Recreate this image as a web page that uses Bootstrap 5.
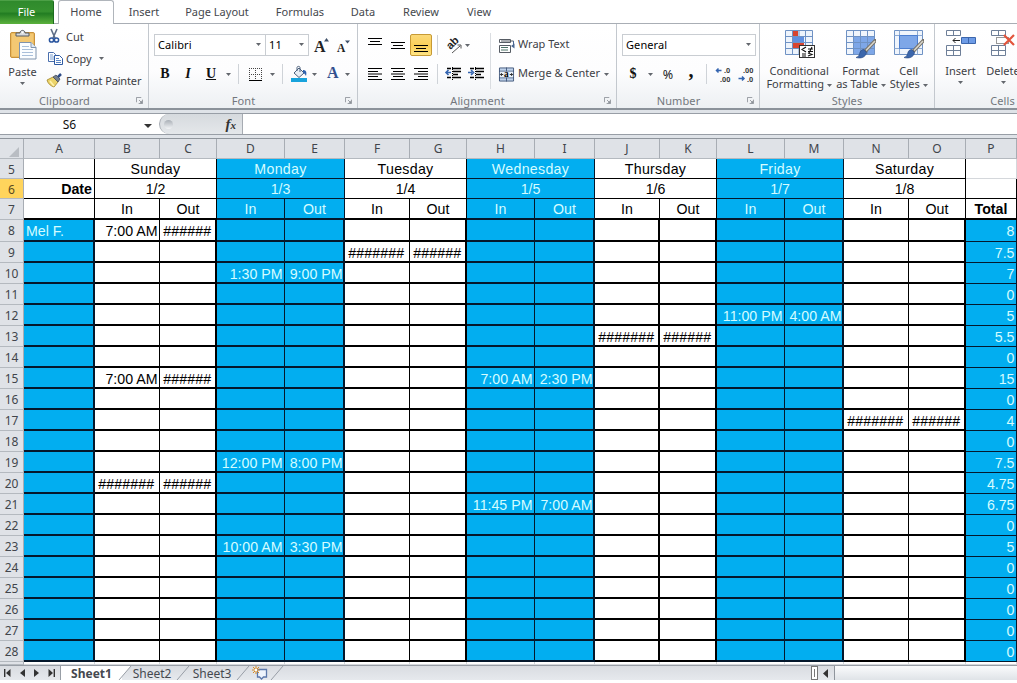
<!DOCTYPE html>
<html lang="en">
<head>
<meta charset="utf-8">
<title>Weekly schedule</title>
<link href="https://cdn.jsdelivr.net/npm/bootstrap@5.3.0/dist/css/bootstrap.min.css" rel="stylesheet">
<style>
body{width:1017px;height:683px;overflow:hidden;background:#fff;font:11px/13px "Noto Sans","Open Sans",sans-serif;color:#3d4045}
svg{display:block;flex:none;overflow:visible}
.app{width:1017px;height:680px;overflow:hidden}
/* ribbon tabs */
.tabs{height:24px;border-bottom:1px solid #a9aeb5}
.tabs>div{height:24px;line-height:24px;text-align:center;flex:none;color:#45484d}
.tab-file{width:54px;background:linear-gradient(#2f8a2c,#35912f 45%,#227d22 55%,#5bb13c);color:#fff!important;border-right:1px solid #1c6d1f;border-top:1px solid #4ca046;margin-right:4px;border-radius:0 2px 0 0;line-height:22px!important}
.tab-home{width:56px;border:1px solid #b0b5bb;border-bottom:0;border-radius:3px 3px 0 0;background:#fff;line-height:22px!important}
.t-ins{width:60px}.t-page{width:86px}.t-form{width:80px}.t-data{width:46px}.t-rev{width:70px}.t-view{width:46px}
/* ribbon */
.ribbon{height:86px;background:linear-gradient(#fff 0,#fdfdfe 55%,#edf0f3 100%);border-bottom:2px solid #8b929a}
.grp{flex:none;position:relative;border-right:1px solid #c3c8ce;height:84px}
.grp-body{height:69px}
.grp-name{height:15px;line-height:16px;color:#73777d;text-align:center;letter-spacing:.1px}
.launch{position:absolute;right:5px;bottom:4px}
.g-clip{width:149px}.g-font{width:209px}.g-align{width:259px}.g-num{width:143px}.g-style{width:175px}.g-cells{width:140px}
.g-clip .grp-name,.g-font .grp-name,.g-num .grp-name,.g-align .grp-name{padding-right:19px}
.r{display:grid;height:22px;align-items:center;justify-items:center}
.rows{padding:10px 0 0 5px;display:grid;row-gap:7px;align-content:start}
.f1{grid-template-columns:112px 43px 24px 20px}
.f2{grid-template-columns:22px 24px 22px 12px 8px 26px 8px 13px 20px 10px 26px 5px}
.a1{grid-template-columns:24px 22px 24px 8px 24px 21px}
.n2{grid-template-columns:22px 12px 24px 22px 8px 26px 20px}
.combo{border:1px solid #c9cdd2;background:#fff;height:22px;width:100%;color:#000;padding:0 4px 0 3px;display:flex;align-items:center;justify-content:space-between;letter-spacing:.1px;line-height:18px;padding-bottom:1px}
.combo.wide{width:134px}
.rule{width:1px;height:20px;background:#cfd3d8}
.rule.tall{height:56px;margin:9px 0 0 4px;background:#dadde1}
.glyph{font:bold 14px/16px "Liberation Serif",serif;color:#111}
.comma{font-size:20px;line-height:10px;padding-bottom:9px}
.pct{font-size:12.500px;color:#222}
.hot{width:22px;height:22px;border:1px solid #c79a35;border-radius:2px;background:linear-gradient(#fbd978,#fbcf58 55%,#ffe586);display:grid;place-items:center}
.big{text-align:center;line-height:13px;display:flex;flex-direction:column;align-items:center;padding-top:6px}
.big svg.pic{margin-bottom:5px}
.big .arr,.cap .arr{display:inline-block}
.clip-col{padding-top:1px}
.clip-col>div{height:22px;display:flex;align-items:center;gap:3px;letter-spacing:-.03px}
.tool-copy{padding-left:1px}
.paste{width:45px}.cond{width:79px}.fmt{width:45px}.cel{width:51px}.ins{width:51px}.del{width:34px}
/* formula bar */
.fbar-wrap{height:29px;background:#dfe3e8;padding-top:3px;border-bottom:1px solid #8f959c}
.fbar{height:22px;background:#fff;border-top:1px solid #989ea6;border-bottom:1px solid #989ea6}
.namebox{width:159px;font-size:12px;color:#111}
.namebox span{width:139px;text-align:center}
.fx{width:84px;background:linear-gradient(#d6dade,#e4e7ea);border:1px solid #a6abb2;border-width:0 1px 0 1px;border-radius:10px 0 0 10px;justify-content:space-between;padding:0 6px 0 4px}
.knob{width:9px;height:9px;border-radius:50%;background:linear-gradient(#a9afb6,#f3f5f7)}
.fx b{font:italic bold 15px/18px "Liberation Serif",serif;color:#333}
.fx b small{font-size:11px}
/* sheet */
.sheet{display:grid;grid-template-columns:24px 71px 65px 57px 68px 60px 65px 57px 68px 60px 65px 57px 68px 59px 65px 57px 51px;
 grid-template-rows:20px 20px 20px 21px 22px repeat(20,21px) 3px;font:14.200px/20px "Liberation Sans",Arial,sans-serif;color:#000;height:526px;overflow:hidden}
.sheet>div{white-space:nowrap;overflow:hidden;padding:0 2px;border:0 solid #000}
.sheet .hd{font:12px/20px "Noto Sans",sans-serif;color:#41454b;text-align:center;background:#dfe2e7;border-right:1px solid #a8adb4;border-bottom:1px solid #b4b9bf;padding:0}
.sheet .rh{line-height:21px}
.sheet .here{background:#ffd45c;color:#5a4a20}
.sheet .blue{background:#02aef0;color:#d4fcff;border-color:#04182c}
.sheet .th{text-align:center;border-width:0 1px 1px 0}
.sheet .day{letter-spacing:.3px}
.sheet .in{border-bottom-width:2px}
.sheet .td{text-align:right;line-height:22px;border-width:0 1px 2px 0;padding:0 1.500px 0 0}
.sheet .td.text-start{padding-left:2px}
.sheet .thick{border-right-width:2px}
.sheet .thick:not(.text-start){padding-right:.500px}
.sheet .hash{letter-spacing:.1px;text-align:center}
.sheet .tot{border-bottom-width:1px}
.sheet .plain{border-color:#d4d7db}
/* tab strip */
.strip{height:15px;background:linear-gradient(#d9dce1,#e6e9ed);border-top:1px solid #989ea6;font-size:12px;line-height:16px;color:#45494f}
.nav4{width:61px;padding:0 0 0 4px;border-right:1px solid #989ea6;display:flex;align-items:center;gap:9px}
.sh1{width:61px;background:#fff;font-weight:700;text-align:center;height:14px}
.sh{width:50px;text-align:center}
.hscroll{flex:1;margin-left:5px;border-left:1px solid #8f959c;background:linear-gradient(#fafbfc,#dfe3e7);height:14px}
.split{width:7px;height:14px;border:1px solid #777;background:#fff;margin-left:528px;display:grid;place-items:center}
.split i{width:1px;height:8px;background:#777}
</style>
</head>
<body>
<svg width="0" height="0" class="position-absolute">
 <defs>
  <symbol id="arr" viewBox="0 0 5 3"><path d="M0 0h5L2.500 3z" fill="#63676d"/></symbol>
  <symbol id="launch" viewBox="0 0 8 8"><path d="M.5 6V.5H6M7.500 3v4.500H3M3.500 3.500l3 3" fill="none" stroke="#8b9097"/><path d="M7 4v3H4z" fill="#8b9097"/></symbol>
  <symbol id="brush" viewBox="0 0 20 20"><path d="M19.500 1.500 9 12.500" stroke="#77736a" stroke-width="3.600" stroke-linecap="round"/><path d="M19 2 10 11.500" stroke="#d9d6cc" stroke-width="1.600"/><path d="M8 10.500c-3 0-4 2-4.500 4.500-.5 1.800-1.800 3-3.500 3.500 5 1.500 10-.5 10.500-5z" fill="#3b66ab" stroke="#27477f" stroke-width=".6"/></symbol>
 </defs>
</svg>
<div class="app">
 <div class="tabs d-flex">
  <div class="tab-file">File</div><div class="tab-home">Home</div><div class="t-ins">Insert</div><div class="t-page">Page Layout</div><div class="t-form">Formulas</div><div class="t-data">Data</div><div class="t-rev">Review</div><div class="t-view">View</div>
 </div>

 <div class="ribbon d-flex overflow-hidden">
  <div class="grp g-clip">
   <div class="grp-body d-flex">
    <div class="big paste">
     <svg class="pic" width="28" height="30" viewBox="0 0 28 30"><rect x="1.500" y="2.500" width="24" height="25" rx="1.500" fill="#ecbb60" stroke="#c8923c"/><rect x="3" y="4" width="21" height="22" fill="#f3c873"/><path d="M7 6V3h4c0-3.500 5-3.500 5 0h4v3z" fill="#d7dade" stroke="#555b63"/><circle cx="13.500" cy="2.500" r="1" fill="#fff"/><path d="M10.500 12.500H22l5 5V29H10.500z" fill="#fbfdff" stroke="#7f93ad"/><path d="M22 12.500v5h5" fill="#dce8f5" stroke="#7f93ad"/><path d="M13 16.500h7M13 19.500h11M13 22.500h11M13 25.500h11" stroke="#a9bfda"/></svg>
     Paste<svg class="arr mt-1" width="5" height="3"><use href="#arr"/></svg>
    </div>
    <div class="clip-col">
     <div><svg width="18" height="14" viewBox="0 0 18 14"><path d="M6 0l4 9M12 0L8 9" stroke="#5d6d86" stroke-width="1.600"/><circle cx="6.500" cy="11" r="2.100" fill="none" stroke="#2a559f" stroke-width="1.500"/><circle cx="11.500" cy="11" r="2.100" fill="none" stroke="#2a559f" stroke-width="1.500"/></svg>Cut</div>
     <div class="tool-copy"><svg width="17" height="14" viewBox="0 0 17 14"><path d="M2.500 1.500h5l2 2v7h-7z" fill="#fff" stroke="#4a6fae"/><path d="M4 4h3M4 6h4M4 8h4" stroke="#7d9fd0"/><path d="M8.500 4.500h5l3 3v6h-8z" fill="#fff" stroke="#2f5aa3"/><path d="M10 7.500h3M10 9.500h5M10 11.500h5" stroke="#5b86c6"/></svg>Copy<svg class="ms-1" width="5" height="3"><use href="#arr"/></svg></div>
     <div><svg width="18" height="14" viewBox="0 0 18 14"><path d="M2 7l6-3 5 5-4 5C6 13 3 11 2 7z" fill="#ecd46a" stroke="#a08327" stroke-width=".8"/><path d="M5 8l4 5" stroke="#fff3b0" stroke-width="1.500"/><path d="M8 4l3-2 4 4-2 3z" fill="#75808e" stroke="#454d59" stroke-width=".8"/><path d="M13 4l3-3" stroke="#2c4a86" stroke-width="2.500"/></svg><span class="text-nowrap" style="letter-spacing:-.15px">Format Painter</span></div>
    </div>
   </div>
   <div class="grp-name">Clipboard</div><svg class="launch" width="7" height="7"><use href="#launch"/></svg>
  </div>

  <div class="grp g-font">
   <div class="grp-body rows">
    <div class="r f1">
     <div class="combo">Calibri<svg width="5" height="3"><use href="#arr"/></svg></div>
     <div class="combo border-start-0">11<svg width="5" height="3"><use href="#arr"/></svg></div>
     <svg width="15" height="15" viewBox="0 0 15 15"><text x="0" y="14" font-family="Liberation Serif,serif" font-weight="700" font-size="16" fill="#222">A</text><path d="M10 3.500L12.500 0 15 3.500z" fill="#3f5068"/></svg>
     <svg width="13" height="15" viewBox="0 0 13 15"><text x="0" y="14" font-family="Liberation Serif,serif" font-weight="700" font-size="11.500" fill="#222">A</text><path d="M8 2.500h5L10.500 5.500z" fill="#3f5068"/></svg>
    </div>
    <div class="r f2">
     <span class="glyph">B</span><span class="glyph fst-italic">I</span><span class="glyph text-decoration-underline">U</span><svg width="5" height="3"><use href="#arr"/></svg><i class="rule"></i>
     <svg width="13" height="13" viewBox="0 0 13 13"><path d="M.5 0v12M6.500 0v12M12.500 0v12M0 .5h13M0 6.500h13" stroke="#444" stroke-dasharray="1 1"/><path d="M0 12.500h13" stroke="#000"/></svg>
     <svg width="5" height="3"><use href="#arr"/></svg><i class="rule"></i>
     <svg width="16" height="16" viewBox="0 0 16 16"><path d="M3 7l5-5 5 5-5 4.500z" fill="#e8eef5" stroke="#4c607c"/><path d="M6 5V1.500c0-1.500 3-1.500 3 0V6" fill="none" stroke="#4c607c"/><path d="M12 4c3 0 4 2 3 6-1-2-2-3-3-3z" fill="#2f62ae"/><path d="M0 12h16v4H0z" fill="#18a3dc"/></svg>
     <svg width="5" height="3"><use href="#arr"/></svg>
     <svg width="11" height="14" viewBox="0 0 11 14"><text x="0" y="11" font-family="Liberation Serif,serif" font-weight="700" font-size="16" fill="#33518e">A</text></svg>
     <svg width="5" height="3"><use href="#arr"/></svg>
    </div>
   </div>
   <div class="grp-name">Font</div><svg class="launch" width="7" height="7"><use href="#launch"/></svg>
  </div>

  <div class="grp g-align">
   <div class="grp-body d-flex">
    <div class="rows">
     <div class="r a1">
      <svg width="14" height="14" viewBox="0 0 14 14"><path d="M0 .5h14M2 3.500h10M0 6.500h14" stroke="#000"/></svg>
      <svg width="14" height="14" viewBox="0 0 14 14"><path d="M0 4.500h14M2 7.500h10M0 10.500h14" stroke="#000"/></svg>
      <div class="hot"><svg width="14" height="14" viewBox="0 0 14 14"><path d="M0 7.500h14M2 10.500h10M0 13.500h14" stroke="#000"/></svg></div>
      <i class="rule"></i>
      <svg width="15" height="15" viewBox="0 0 15 15"><text transform="translate(4.500 12) rotate(-45)" font-family="Liberation Sans,sans-serif" font-weight="700" font-size="11" fill="#222">ab</text><path d="M6 15l8-7M15 7v3.500M15 7h-3.500" stroke="#555" fill="none"/></svg>
      <svg class="me-auto" width="5" height="3"><use href="#arr"/></svg>
     </div>
     <div class="r a1">
      <svg width="14" height="12" viewBox="0 0 14 12"><path d="M0 .5h14M0 3.500h10M0 6h14M0 8.500h10M0 11.500h14" stroke="#000"/></svg>
      <svg width="14" height="12" viewBox="0 0 14 12"><path d="M0 .5h14M2 3.500h10M0 6h14M2 8.500h10M0 11.500h14" stroke="#000"/></svg>
      <svg width="14" height="12" viewBox="0 0 14 12"><path d="M0 .5h14M4 3.500h10M0 6h14M4 8.500h10M0 11.500h14" stroke="#000"/></svg>
      <i class="rule"></i>
      <svg width="16" height="14" viewBox="0 0 16 14"><path d="M2 1.500h4M7 1.500h9M8 4.500h8M8 7.500h5M2 10.500h4M7 10.500h9" stroke="#000" stroke-width="1.500"/><path d="M7.500 0v14" stroke="#000" stroke-dasharray="1 1"/><path d="M6 5.500H2M3.500 3L1 5.500 3.500 8" fill="none" stroke="#3565b0" stroke-width="1.600"/></svg>
      <svg width="16" height="14" viewBox="0 0 16 14"><path d="M2 1.500h4M7 1.500h9M8 4.500h8M8 7.500h5M2 10.500h4M7 10.500h9" stroke="#000" stroke-width="1.500"/><path d="M7.500 0v14" stroke="#000" stroke-dasharray="1 1"/><path d="M0 5.500h4M3 3l2.500 2.500L3 8" fill="none" stroke="#3565b0" stroke-width="1.600"/></svg>
     </div>
    </div>
    <i class="rule tall"></i>
    <div class="rows ps-2">
     <div class="d-flex align-items-center r"><svg class="me-1" width="15" height="15" viewBox="0 0 15 15"><path d="M.5 1.500h11v3H.5z" fill="#fff" stroke="#555b63"/><path d="M2 3h12.500" stroke="#555b63"/><path d="M.5 7.500h11v7H.5z" fill="#fff" stroke="#555b63"/><path d="M2 9.500h7M2 12h7" stroke="#4c7267"/><path d="M14.500 3v5" stroke="#4b6790"/><path d="M12 8l3.500-2.500v5z" fill="#4b6790"/></svg><span class="pb-1">Wrap Text</span></div>
     <div class="d-flex align-items-center r"><svg class="me-1" width="15" height="15" viewBox="0 0 16 15"><path d="M.5.5h15v14H.5z" fill="#bfd2eb" stroke="#43597c"/><path d="M8 0v15M0 4h16M0 11h16" stroke="#43597c"/><path d="M1 4.500h14v6H1z" fill="#e9f1fa"/><text x="5.300" y="10.300" font-family="Liberation Serif,serif" font-weight="700" font-size="10" fill="#000">a</text><path d="M1.500 7.500h3M14.500 7.500h-3M3 6L1.500 7.500 3 9M13 6l1.500 1.500L13 9" fill="none" stroke="#222"/></svg><span class="pb-1">Merge &amp; Center</span><svg class="ms-1" width="5" height="3"><use href="#arr"/></svg></div>
    </div>
   </div>
   <div class="grp-name">Alignment</div><svg class="launch" width="7" height="7"><use href="#launch"/></svg>
  </div>

  <div class="grp g-num">
   <div class="grp-body rows">
    <div class="combo wide">General<svg width="5" height="3"><use href="#arr"/></svg></div>
    <div class="r n2">
     <span class="glyph">$</span><svg width="5" height="3"><use href="#arr"/></svg><span class="pct">%</span><span class="glyph comma">,</span><i class="rule"></i>
     <svg width="16" height="15" viewBox="0 0 16 15" font-family="Liberation Sans,sans-serif" font-size="7.500" font-weight="700" fill="#333"><text x="9" y="6">.0</text><text x="5" y="14.700">.00</text><path d="M6.500 3.500H1.500M3.500 1.500l-2 2 2 2" fill="none" stroke="#3565b0" stroke-width="1.500"/></svg>
     <svg width="16" height="15" viewBox="0 0 16 15" font-family="Liberation Sans,sans-serif" font-size="7.500" font-weight="700" fill="#333"><text x="5" y="6">.00</text><text x="9" y="14.700">.0</text><path d="M.5 11.500h5.500M4 9.500l2 2-2 2" fill="none" stroke="#3565b0" stroke-width="1.500"/></svg>
    </div>
   </div>
   <div class="grp-name">Number</div><svg class="launch" width="7" height="7"><use href="#launch"/></svg>
  </div>

  <div class="grp g-style">
   <div class="grp-body d-flex">
    <div class="big cond"><svg class="pic" width="29" height="29" viewBox="0 0 29 29"><path d="M.5.500h27v24H.500z" fill="#eef4fc"/><path d="M7 .500h6v6H7zM7 12.500h12v6H7z" fill="#d8432f"/><path d="M7 6.500h12v6H7z" fill="#5f8fe0"/><path d="M.5.500h27v24H.500zM7.500.500v24M14 .500v6M14 18v6M20.500.500v24M.500 6.500h27M.500 12.500h27M.500 18.500h27" fill="none" stroke="#6f92c4"/><rect x="14.500" y="15.500" width="15" height="12" fill="#fff" stroke="#333"/><path d="M21 17l-4 2.500 4 2.500M17 24h4M17 26h4M23 19h5M23 21.500h5M27 17l-3 6M23 23l4 1.500-4 1.500" fill="none" stroke="#111" stroke-width="1.100"/></svg>Conditional<span class="cap">Formatting <svg class="arr align-middle" width="5" height="3"><use href="#arr"/></svg></span></div>
    <div class="big fmt"><svg class="pic" width="29" height="29" viewBox="0 0 29 29"><path d="M.5.500h28v24H.500z" fill="#f0f5fc"/><path d="M7.500 6.500h21v18h-21z" fill="#7ea7e8"/><path d="M.5.500h28v24H.500zM7.500.500v24M14.500.500v24M21.500.500v24M.500 6.500h28M.500 12.500h28M.500 18.500h28" fill="none" stroke="#6f92c4"/><use href="#brush" x="10" y="9" width="20" height="20"/></svg><span>Format</span><span class="cap text-nowrap">as Table <svg class="arr align-middle" width="5" height="3"><use href="#arr"/></svg></span></div>
    <div class="big cel"><svg class="pic" width="29" height="29" viewBox="0 0 29 29"><path d="M.5.500h28v24H.500z" fill="#f0f5fc" stroke="#6f92c4"/><path d="M5.500.500v24M23.500.500v24M.500 5.500h28M.500 18.500h28" stroke="#8fabd2"/><path d="M5.500 5.500h18v13h-18z" fill="#7ea7e8" stroke="#4d7fd0"/><use href="#brush" x="10" y="9" width="20" height="20"/></svg>Cell<span class="cap">Styles <svg class="arr align-middle" width="5" height="3"><use href="#arr"/></svg></span></div>
   </div>
   <div class="grp-name">Styles</div>
  </div>

  <div class="grp g-cells">
   <div class="grp-body d-flex">
    <div class="big ins"><svg class="pic" width="30" height="29" viewBox="0 0 30 29"><path d="M.5.500h14v5H.500zM7.500.500v5M.500 15.500h14v10H.500zM7.500 15.500v10M.500 20.500h14" fill="#fff" stroke="#6e7f98"/><path d="M15.500 7.500h14v6h-14z" fill="#6d9be6" stroke="#3c66ac"/><path d="M22.500 7.500v6" stroke="#3c66ac"/><path d="M14 10.500H7M9.500 8L7 10.500 9.500 13" fill="none" stroke="#222"/></svg>Insert<svg class="arr mt-1" width="5" height="3"><use href="#arr"/></svg></div>
    <div class="big del"><svg class="pic" width="24" height="29" viewBox="0 0 24 29"><path d="M.5.500h14v5H.500zM7.500.500v5M.500 15.500h14v10H.500zM7.500 15.500v10M.500 20.500h14" fill="#fff" stroke="#6e7f98"/><path d="M5.500 7.500h12v6h-12z" fill="none" stroke="#333" stroke-dasharray="1 1"/><path d="M13 5l10 10M23 5L13 15" stroke="#e2543c" stroke-width="2.200"/></svg>Delete<svg class="arr mt-1" width="5" height="3"><use href="#arr"/></svg></div>
   </div>
   <div class="grp-name pe-1">Cells</div>
  </div>
 </div>

 <div class="fbar-wrap">
  <div class="fbar d-flex">
   <div class="namebox d-flex align-items-center"><span>S6</span><svg class="ms-1 mt-1" width="9" height="4" viewBox="0 0 9 4"><path d="M1 0h8L5 4z" fill="#333"/></svg></div>
   <div class="fx d-flex align-items-center"><i class="knob"></i><b>f<small>x</small></b></div>
  </div>
 </div>

 <div class="sheet" id="sheet"></div>

 <div class="strip d-flex">
  <div class="nav4">
   <svg width="7" height="8" viewBox="0 0 7 8"><path d="M.7 0v8" stroke="#333" stroke-width="1.400"/><path d="M6.500 0v8L2 4z" fill="#333"/></svg>
   <svg width="5" height="8" viewBox="0 0 5 8"><path d="M5 0v8L0 4z" fill="#333"/></svg>
   <svg width="5" height="8" viewBox="0 0 5 8"><path d="M0 0v8l5-4z" fill="#333"/></svg>
   <svg width="7" height="8" viewBox="0 0 7 8"><path d="M6.300 0v8" stroke="#333" stroke-width="1.400"/><path d="M.5 0v8L5 4z" fill="#333"/></svg>
  </div>
  <div class="sh1">Sheet1</div>
  <svg width="5" height="14" viewBox="0 0 5 14"><path d="M-3 14L9 0H-3z" fill="#fff"/><path d="M-3 14L9 0" stroke="#989ea6"/></svg>
  <div class="sh">Sheet2</div>
  <svg width="10" height="14" viewBox="0 0 10 14"><path d="M0 14L12 0" stroke="#989ea6"/></svg>
  <div class="sh">Sheet3</div>
  <svg width="14" height="14" viewBox="0 0 14 14"><path d="M0 14L12 0" stroke="#989ea6"/></svg>
  <svg width="16" height="14" viewBox="0 0 16 14"><path d="M6.500 3.500h9v7.500h-3l-2 2-2-2h-2z" fill="#eef4fc" stroke="#5b78ab" stroke-width="1.300"/><path d="M5 0v8M1 4h8M2 1l6 6M8 1L2 7" stroke="#d98a1f"/><circle cx="5" cy="4" r="1.300" fill="#fff"/></svg>
  <svg width="16" height="14" viewBox="0 0 16 14"><path d="M4 14L16 0" stroke="#989ea6"/></svg>
  <div class="split"><i></i></div>
  <svg class="ms-1 mt-1" width="7" height="9" viewBox="0 0 7 9"><path d="M6-1v9L1 3.500z" fill="#333"/></svg>
  <div class="hscroll"></div>
 </div>
</div>
<script src="https://cdn.jsdelivr.net/npm/bootstrap@5.3.0/dist/js/bootstrap.bundle.min.js"></script>
<script>
const sheet = document.getElementById('sheet');
const letters = 'ABCDEFGHIJKLMNOP';
const days = ['Sunday','Monday','Tuesday','Wednesday','Thursday','Friday','Saturday'];
const H7 = '#######', H6 = '######';
// shifts keyed by row, then column letter
const shifts = {
  8:{B:'7:00 AM',C:H6}, 9:{F:H7,G:H6}, 10:{D:'1:30 PM',E:'9:00 PM'},
  12:{L:'11:00 PM',M:'4:00 AM'}, 13:{J:H7,K:H6}, 15:{B:'7:00 AM',C:H6,H:'7:00 AM',I:'2:30 PM'},
  17:{N:H7,O:H6}, 19:{D:'12:00 PM',E:'8:00 PM'}, 20:{B:H7,C:H6}, 21:{H:'11:45 PM',I:'7:00 AM'},
  23:{D:'10:00 AM',E:'3:30 PM'}
};
const totals = {8:8,9:7.5,10:7,12:5,13:5.5,15:15,17:4,19:7.5,20:4.75,21:6.75,23:5};
const blueCols = 'DEHILM', thickCols = 'ACEGIKMO';
function cell(text, cls, span) {
  const d = document.createElement('div');
  d.className = cls; d.textContent = text;
  if (span) d.style.gridColumn = 'span ' + span;
  sheet.append(d);
  return d;
}
cell('', 'hd').innerHTML = '<svg width="11" height="11" viewBox="0 0 11 11" class="ms-2 mt-2"><path d="M11 0v10H1z" fill="#b9bdc3"/></svg>';
for (const l of letters) cell(l, 'hd');
cell(5, 'hd rh'); cell('', 'th');
days.forEach((d, i) => cell(d, 'th day' + (i % 2 ? ' blue' : ''), 2));
cell('', 'th plain');
cell(6, 'hd rh here'); cell('Date', 'th fw-bold text-end');
days.forEach((d, i) => cell('1/' + (i + 2), 'th' + (i % 2 ? ' blue' : ''), 2));
cell('', 'th');
cell(7, 'hd rh'); cell('', 'th in');
days.forEach((d, i) => ['In', 'Out'].forEach(t => cell(t, 'th in' + (i % 2 ? ' blue' : ''))));
cell('Total', 'th in fw-bold');
for (let r = 8; r <= 28; r++) {
  cell(r, 'hd rh');
  cell(r === 8 ? 'Mel F.' : '', 'td blue thick text-start');
  for (const l of letters.slice(1, 15)) {
    const t = (shifts[r] || {})[l] || '';
    cell(t, 'td' + (blueCols.includes(l) ? ' blue' : '') + (thickCols.includes(l) || l === 'J' ? ' thick' : '') + (t[0] === '#' ? ' hash' : ''));
  }
  cell(totals[r] || 0, 'td blue tot');
}
cell('', 'hd');
for (const l of letters) cell('', 'th plain');
</script>
</body>
</html>
